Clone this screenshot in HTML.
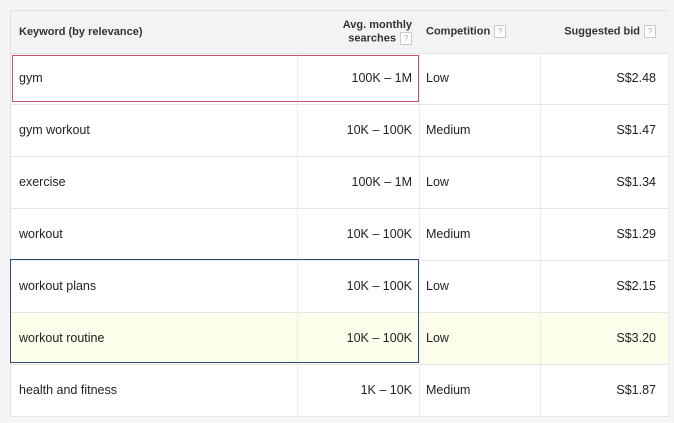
<!DOCTYPE html>
<html><head><style>
body{margin:0;width:674px;height:423px;background:#f5f5f5;font-family:"Liberation Sans",sans-serif;position:relative;overflow:hidden}
.t{position:absolute;left:10px;top:10px;width:658px;height:405px;background:#fff;border-top:1px solid #e0e0e0;border-left:1px solid #e0e0e0}
.h{position:absolute;left:0;top:0;width:658px;height:42px;background:#f3f3f3;border-bottom:1px solid #e4e4e4;font-size:11px;font-weight:bold;color:#333}
.q{display:inline-block;width:10px;height:11px;border:1px solid #ccc;font-size:8px;color:#aaa;text-align:center;line-height:11px;font-weight:normal;vertical-align:middle;margin-left:4px;background:#fff}
.r{position:absolute;left:0;width:658px;height:51px;border-bottom:1px solid #e6e6e6;font-size:12.5px;color:#222}
.r span{position:absolute;top:18px}
.v{position:absolute;top:42px;width:1px;height:363px;background:#ececec}
</style></head><body>
<div class="t">
<div class="h">
<div style="position:absolute;left:8px;top:15px">Keyword (by relevance)</div>
<div style="position:absolute;right:257px;top:8px;text-align:right;line-height:13px">Avg. monthly<br>searches<span class="q">?</span></div>
<div style="position:absolute;left:415px;top:14px">Competition<span class="q">?</span></div>
<div style="position:absolute;right:13px;top:14px">Suggested bid<span class="q">?</span></div>
</div>
<div class="r" style="top:42px"><span style="left:8px">gym</span><span style="right:257px">100K – 1M</span><span style="left:415px">Low</span><span style="right:13px">S$2.48</span></div>
<div class="r" style="top:94px"><span style="left:8px">gym workout</span><span style="right:257px">10K – 100K</span><span style="left:415px">Medium</span><span style="right:13px">S$1.47</span></div>
<div class="r" style="top:146px"><span style="left:8px">exercise</span><span style="right:257px">100K – 1M</span><span style="left:415px">Low</span><span style="right:13px">S$1.34</span></div>
<div class="r" style="top:198px"><span style="left:8px">workout</span><span style="right:257px">10K – 100K</span><span style="left:415px">Medium</span><span style="right:13px">S$1.29</span></div>
<div class="r" style="top:250px"><span style="left:8px">workout plans</span><span style="right:257px">10K – 100K</span><span style="left:415px">Low</span><span style="right:13px">S$2.15</span></div>
<div class="r" style="top:302px;background:#fdfdec"><span style="left:8px">workout routine</span><span style="right:257px">10K – 100K</span><span style="left:415px">Low</span><span style="right:13px">S$3.20</span></div>
<div class="r" style="top:354px"><span style="left:8px">health and fitness</span><span style="right:257px">1K – 10K</span><span style="left:415px">Medium</span><span style="right:13px">S$1.87</span></div>
<div class="v" style="left:286px"></div>
<div class="v" style="left:408px"></div>
<div class="v" style="left:529px"></div>
<div class="v" style="left:657px"></div>
</div>
<div style="position:absolute;left:12px;top:55px;width:405px;height:45px;border:1px solid #c8546a"></div>
<div style="position:absolute;left:10px;top:259px;width:407px;height:102px;border:1px solid #2a4f7a"></div>
</body></html>
